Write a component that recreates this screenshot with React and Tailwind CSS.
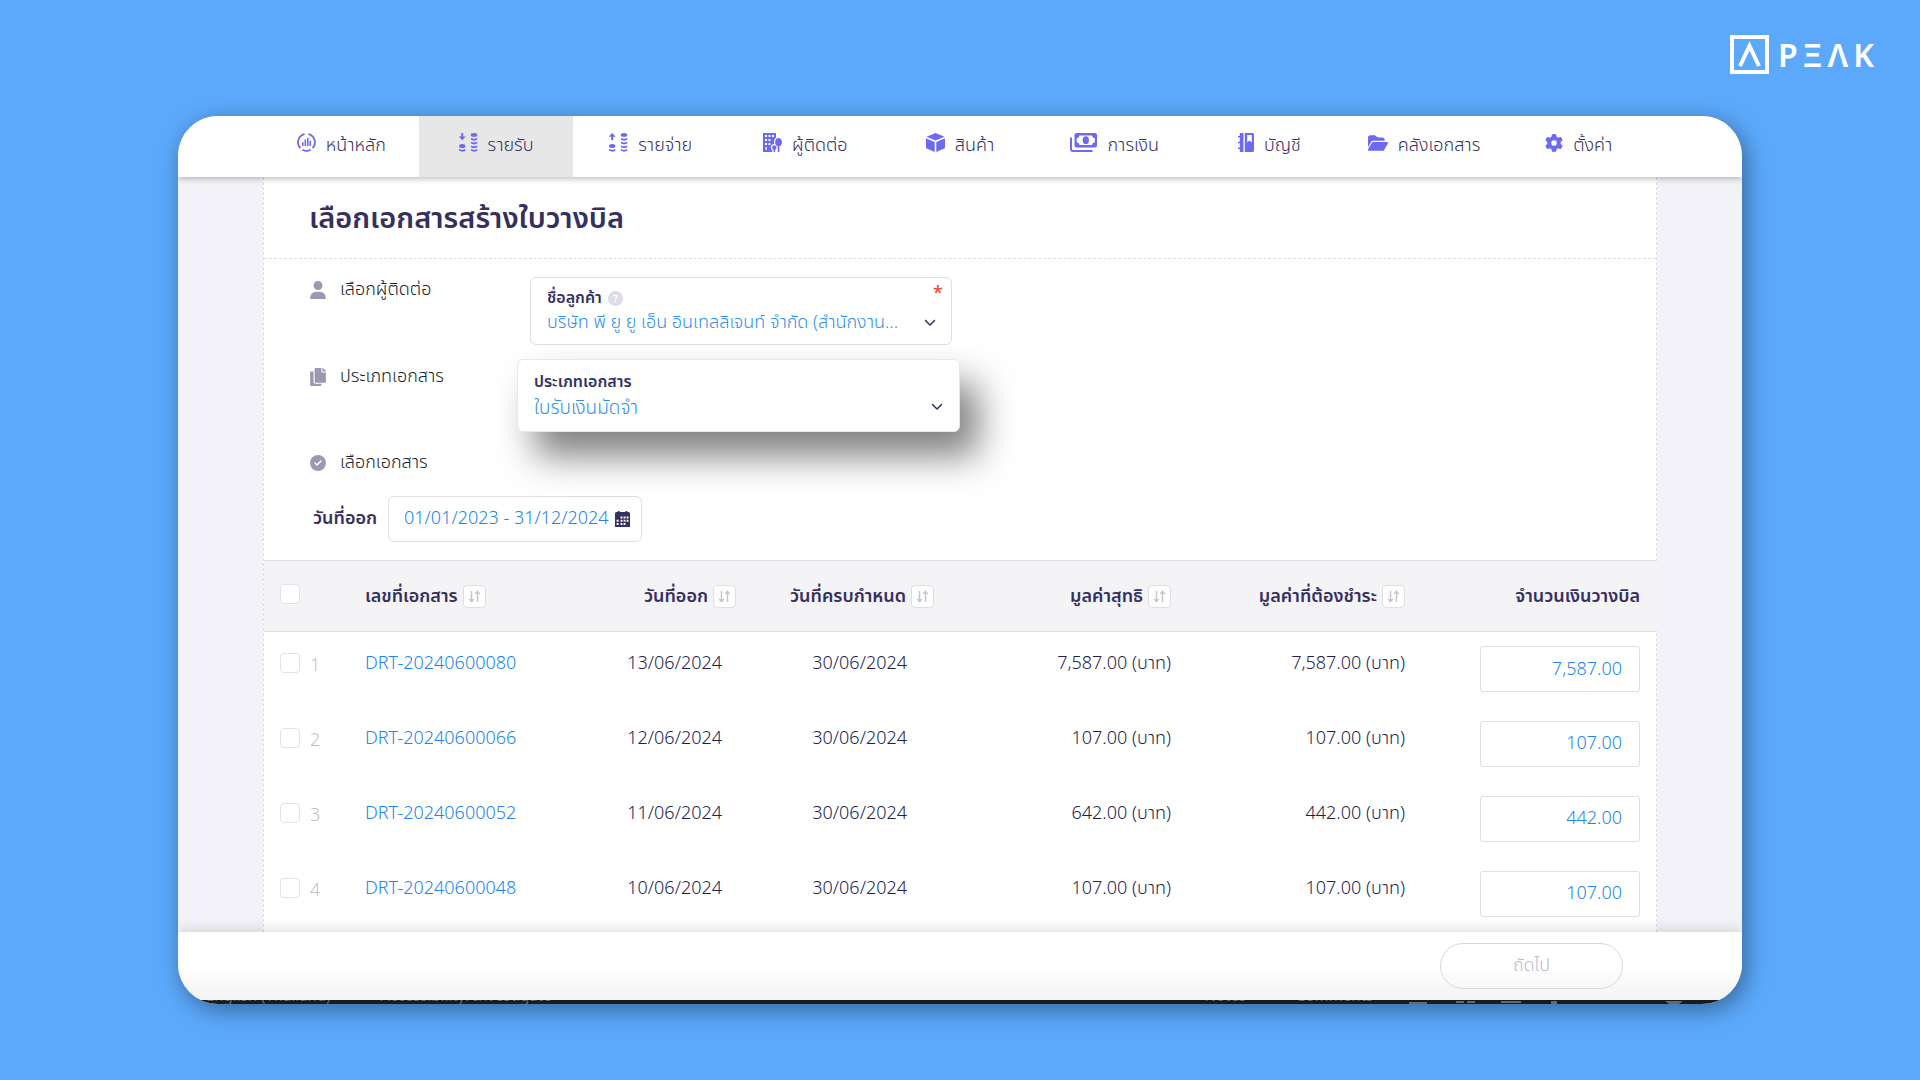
import { useState } from "react";
import {
  FaUser,
  FaCircleCheck,
  FaCircleQuestion,
  FaFolderOpen,
  FaGear,
  FaChevronDown,
} from "react-icons/fa6";
import { FaCopy } from "react-icons/fa";

function HomeIcon() {
  return (
    <svg width="19" height="19" viewBox="0 0 19 19" fill="none" stroke="currentColor" aria-hidden="true">
      <path d="M7.600 1.200A8.400 8.400 0 0 0 3.400 15.200M11.400 1.200A8.400 8.400 0 0 1 15.600 15.200M5.400 16.800a8.400 8.400 0 0 0 8.200 0" strokeWidth="1.800" />
      <path d="M5.800 13V9.200M8.300 13V6.600M10.800 13V5M13.300 13V7.800" strokeWidth="1.600" />
    </svg>
  );
}

function CoinsIcon({ up }) {
  return (
    <svg width="19" height="19" viewBox="0 0 19 19" fill="currentColor" aria-hidden="true">
      <path d={up ? "M3.200 0 6.700 3.700H4.200V7.200H2.200V3.700H-.3z" : "M2.200 0h2v3.500h2.500L3.200 7.200-.3 3.500h2.500z"} />
      <ellipse cx="3.200" cy="13" rx="3.200" ry="2" />
      <path d="M0 16c1.900 1 4.500 1 6.400 0v1.600c-1.400 1.600-5 1.600-6.400 0z" />
      <ellipse cx="15" cy="1.900" rx="3.300" ry="1.900" />
      <path d="M11.900 5c1.800 1.100 4.600 1.100 6.400 0v1.600c-1.500 1.500-4.900 1.500-6.400 0z" />
      <path d="M11.900 8.700c1.800 1.100 4.600 1.100 6.400 0v1.600c-1.500 1.500-4.900 1.500-6.400 0z" />
      <path d="M11.900 12.400c1.800 1.100 4.600 1.100 6.400 0V14c-1.500 1.500-4.900 1.500-6.400 0z" />
      <path d="M11.900 16.100c1.800 1.100 4.600 1.100 6.400 0v1.500c-1.500 1.500-4.900 1.500-6.400 0z" />
    </svg>
  );
}

function BuildingIcon() {
  return (
    <svg width="19" height="19" viewBox="0 0 19 19" fill="currentColor" aria-hidden="true">
      <path fillRule="evenodd" d="M0 0h13v4.600c-1.300 1-2 2.600-2 4.400 0 .7.100 1.400.4 2C9.500 11 8 12.500 8 14.500c0 1.300.5 2.300 1.300 3V19H0zM2 2v2h2V2zm3.500 0v2h2V2zM9 2v2h2V2zM2 6v2h2V6zm3.500 0v2h2V6zM2 10v2h2v-2zm3.500 0v2h2v-2zM2.500 14v3h1.300v-3z" />
      <path d="M15.500 5c2 0 3.500 2 3.500 4.300 0 2-1 3.500-2.600 4V19h-1.700v-5.700c-1.600-.5-2.600-2-2.600-4C12.100 7 13.500 5 15.500 5z" />
      <path d="M11.300 12.300c1.300 0 2.100 1.200 2.100 2.500 0 1-.5 1.800-1.300 2.100V19h-1.500v-2.100c-.8-.3-1.400-1.100-1.400-2.100 0-1.300.8-2.500 2.100-2.500z" />
    </svg>
  );
}

function BoxIcon() {
  return (
    <svg width="19" height="19" viewBox="0 0 19 19" fill="currentColor" aria-hidden="true">
      <path d="M9.500 0 18.500 3.800 9.500 7.600.5 3.800z" />
      <path d="M0 5.300 8.700 9v10L.8 15.600a1.300 1.300 0 0 1-.8-1.200zM19 5.300 10.300 9v10l7.900-3.400a1.300 1.300 0 0 0 .8-1.200z" />
    </svg>
  );
}

function MoneyIcon() {
  return (
    <svg width="27" height="19" viewBox="0 0 27 19" fill="currentColor" aria-hidden="true">
      <path fillRule="evenodd" d="M6.500 0h18.500a2 2 0 0 1 2 2v10.500a2 2 0 0 1-2 2H6.500a2 2 0 0 1-2-2V2a2 2 0 0 1 2-2zM9.500 2.600A3 3 0 0 1 6.700 5.200v4.100a3 3 0 0 1 2.800 2.600H22a3 3 0 0 1 2.800-2.600V5.200A3 3 0 0 1 22 2.600z" />
      <ellipse cx="15.800" cy="7.200" rx="3.100" ry="3.900" />
      <path d="M1 4.500V16a2 2 0 0 0 2 2h19.500" fill="none" stroke="currentColor" strokeWidth="2" />
    </svg>
  );
}

function BookIcon() {
  return (
    <svg width="16" height="19" viewBox="0 0 16 19" fill="currentColor" aria-hidden="true">
      <path d="M1.800 0h3.700v19H1.800zM0 3h2v1.600H0zM0 8.700h2v1.600H0zM0 14.400h2V16H0z" />
      <path fillRule="evenodd" d="M6.800 0h7.700A1.500 1.500 0 0 1 16 1.500v16a1.500 1.500 0 0 1-1.500 1.500H6.800zM9.200 2v7.600l2.300-2 2.300 2V2z" />
    </svg>
  );
}

function CalendarIcon() {
  return (
    <svg width="15" height="16" viewBox="0 0 15 16" fill="currentColor" aria-hidden="true">
      <path fillRule="evenodd" d="M1.500 1h1.300V0h1.800v1h5.800V0h1.800v1h1.300A1.500 1.500 0 0 1 15 2.500V16H0V2.500A1.500 1.500 0 0 1 1.500 1zM5.600 5.500v2h1.900v-2zm3 0v2h1.900v-2zm3 0v2h1.900v-2zm-10 3.200v2h2v-2zm4 0v2h1.900v-2zm3 0v2h1.900v-2zm3 0v2h1.900v-2zm-10 3.200v2h2v-2zm4 0v2h1.900v-2zm3 0v2h1.900v-2z" />
    </svg>
  );
}

function SortButton({ label }) {
  return (
    <button
      type="button"
      aria-label={label}
      className="flex h-[23px] w-[23px] shrink-0 items-center justify-center rounded border border-[#dfdfe2] bg-white text-[#c8c8cc]"
    >
      <svg width="13" height="13" viewBox="0 0 13 13" fill="none" stroke="currentColor" strokeWidth="1.500" aria-hidden="true">
        <path d="M3.500 1v10.500M1.200 9l2.300 2.700L5.800 9M9.500 12V1.500M7.200 4l2.300-2.700L11.800 4" />
      </svg>
    </button>
  );
}

const tabs = [
  { label: "หน้าหลัก", icon: <HomeIcon /> },
  { label: "รายรับ", icon: <CoinsIcon />, active: true },
  { label: "รายจ่าย", icon: <CoinsIcon up /> },
  { label: "ผู้ติดต่อ", icon: <BuildingIcon /> },
  { label: "สินค้า", icon: <BoxIcon /> },
  { label: "การเงิน", icon: <MoneyIcon /> },
  { label: "บัญชี", icon: <BookIcon /> },
  { label: "คลังเอกสาร", icon: <FaFolderOpen className="size-5" /> },
  { label: "ตั้งค่า", icon: <FaGear className="size-[18px]" /> },
];

const rows = [
  { id: 1, doc: "DRT-20240600080", issued: "13/06/2024", due: "30/06/2024", net: "7,587.00", pay: "7,587.00" },
  { id: 2, doc: "DRT-20240600066", issued: "12/06/2024", due: "30/06/2024", net: "107.00", pay: "107.00" },
  { id: 3, doc: "DRT-20240600052", issued: "11/06/2024", due: "30/06/2024", net: "642.00", pay: "442.00" },
  { id: 4, doc: "DRT-20240600048", issued: "10/06/2024", due: "30/06/2024", net: "107.00", pay: "107.00" },
];

function Logo() {
  return (
    <div className="flex items-center gap-[9px] text-white" aria-label="PEAK">
      <svg width="39" height="39" viewBox="0 0 39 39" fill="none" stroke="currentColor" aria-hidden="true">
        <rect x="2" y="2" width="35" height="35" strokeWidth="4" />
        <path d="M10 31 19.500 11 29 31" strokeWidth="4" />
      </svg>
      <div className="flex gap-[5px] font-['Noto_Sans',sans-serif] text-[32px] leading-[38px] font-semibold">
        <span>P</span>
        <span>Ξ</span>
        <span>Λ</span>
        <span>K</span>
      </div>
    </div>
  );
}

function SectionLabel({ icon, children }) {
  return (
    <div className="flex h-[26px] items-center gap-3.5 text-[18px] font-[350] text-[#1d1d2b]">
      <span className="flex w-4 justify-center text-[#9b98b3]">{icon}</span>
      <span>{children}</span>
    </div>
  );
}

function HeaderCell({ children, align, sort = true }) {
  return (
    <div className={align === "left" ? "flex items-center gap-[5px]" : "flex items-center justify-end gap-[5px]"}>
      <span className="pt-0.5">{children}</span>
      {sort && <SortButton label={"เรียงตาม" + children} />}
    </div>
  );
}

const checkboxStyle = "block size-5 shrink-0 appearance-none rounded border border-[#e2e2ea] bg-white checked:bg-[#6d6af0]";

export default function App() {
  const [range, setRange] = useState("01/01/2023 - 31/12/2024");

  return (
    <div className="min-h-screen bg-[#5ca9fc] font-['Noto_Sans_Thai','Noto_Sans',sans-serif] text-[18px] leading-[26px] text-[#35305f]">
      <header className="flex h-[116px] items-start justify-end pt-[35px] pr-[46px]">
        <Logo />
      </header>

      <div className="mx-[178px] overflow-hidden rounded-[40px] bg-white shadow-[4px_6px_24px_rgba(0,0,0,0.400)]">
        <nav className="relative z-20 flex bg-white px-[86px] shadow-[0_2px_6px_rgba(0,0,0,0.250)]">
          {tabs.map((t) => (
            <a
              key={t.label}
              href="#"
              className={
                t.active
                  ? "flex h-[61px] flex-1 items-center justify-center gap-2.5 bg-[#e7e7e7] pb-0.5 font-[350]"
                  : "flex h-[61px] flex-1 items-center justify-center gap-2.5 pb-0.5 font-[350]"
              }
            >
              <span className="pb-1.5 text-[#6d6af0]">{t.icon}</span>
              <span>{t.label}</span>
            </a>
          ))}
        </nav>

        <main className="bg-[#f3f2f8] px-[85px]">
          <div className="border-x border-dashed border-[#dddde2] bg-white">
            <h1 className="flex h-[82px] items-center border-b border-dashed border-[#dddde2] px-[45px] pt-0.5 text-[29px] font-semibold">
              เลือกเอกสารสร้างใบวางบิล
            </h1>

            <section className="px-[46px] pt-[18px] pb-[18px]">
              <div className="grid grid-cols-[220px_1fr] items-start">
                <SectionLabel icon={<FaUser className="size-[18px]" />}>เลือกผู้ติดต่อ</SectionLabel>
                <div className="relative flex h-[68px] w-[422px] flex-col rounded-md border border-[#e0dfe6] bg-white px-4 pt-[7px]">
                  <label htmlFor="customer" className="flex items-center gap-1.5 text-[16px] leading-[26px] font-semibold">
                    ชื่อลูกค้า
                    <FaCircleQuestion className="size-[15px] text-[#dcdbe6]" />
                  </label>
                  <select id="customer" className="w-full appearance-none bg-transparent pr-8 leading-6 font-[350] text-[#2f8ff0] outline-none">
                    <option>บริษัท พี ยู ยู เอ็น อินเทลลิเจนท์ จำกัด (สำนักงาน...</option>
                  </select>
                  <span className="pointer-events-none absolute top-1 right-2 text-[18px] leading-6 font-medium text-[#f0452c]">*</span>
                  <FaChevronDown className="pointer-events-none absolute top-[38px] right-[15px] size-3" />
                </div>
              </div>

              <div className="mt-3.5 grid grid-cols-[220px_1fr] items-start">
                <div className="pt-[5px]">
                  <SectionLabel icon={<FaCopy className="size-[18px]" />}>ประเภทเอกสาร</SectionLabel>
                </div>
                <div className="relative z-10 -ml-[13px] flex h-[73px] w-[443px] flex-col rounded-md border border-[#e8e8ec] bg-white px-4 pt-[9px] shadow-[18px_24px_36px_rgba(0,0,0,0.500)]">
                  <label htmlFor="doctype" className="text-[16px] leading-[26px] font-semibold">
                    ประเภทเอกสาร
                  </label>
                  <select id="doctype" className="w-full appearance-none bg-transparent pr-8 text-[19px] leading-7 font-[350] text-[#2f8ff0] outline-none">
                    <option>ใบรับเงินมัดจำ</option>
                  </select>
                  <FaChevronDown className="pointer-events-none absolute top-10 right-4 size-3" />
                </div>
              </div>

              <div className="mt-[18px]">
                <SectionLabel icon={<FaCircleCheck className="size-[18px]" />}>เลือกเอกสาร</SectionLabel>
              </div>

              <div className="mt-5 flex items-center gap-[11px] pl-[3px]">
                <label htmlFor="issued" className="font-semibold">
                  วันที่ออก
                </label>
                <div className="flex h-[46px] w-[254px] items-center rounded-md border border-[#e0dfe6] pr-[11px] pl-[15px]">
                  <input
                    id="issued"
                    value={range}
                    onChange={(e) => setRange(e.target.value)}
                    className="w-0 flex-1 bg-transparent font-light text-[#2085f0] outline-none"
                  />
                  <CalendarIcon />
                </div>
              </div>
            </section>

            <table className="w-full table-fixed border-collapse">
              <colgroup>
                <col className="w-[101px]" />
                <col className="w-[173px]" />
                <col className="w-[198px]" />
                <col className="w-[198px]" />
                <col className="w-[237px]" />
                <col className="w-[234px]" />
                <col className="w-[252px]" />
              </colgroup>
              <thead>
                <tr className="h-[71px] border-t border-b border-t-[#dddde2] border-b-[#dddde2] bg-[#f4f4f7] [&>th]:font-semibold">
                  <th className="pb-1 pl-4">
                    <input type="checkbox" aria-label="เลือกทั้งหมด" className={checkboxStyle} />
                  </th>
                  <th>
                    <HeaderCell align="left">เลขที่เอกสาร</HeaderCell>
                  </th>
                  <th>
                    <HeaderCell>วันที่ออก</HeaderCell>
                  </th>
                  <th>
                    <HeaderCell>วันที่ครบกำหนด</HeaderCell>
                  </th>
                  <th>
                    <HeaderCell>มูลค่าสุทธิ</HeaderCell>
                  </th>
                  <th>
                    <HeaderCell>มูลค่าที่ต้องชำระ</HeaderCell>
                  </th>
                  <th className="pr-[17px]">
                    <HeaderCell sort={false}>จำนวนเงินวางบิล</HeaderCell>
                  </th>
                </tr>
              </thead>
              <tbody>
                {rows.map((r) => (
                  <tr key={r.id} className="h-[75px] font-light text-[#231e50] [&>td]:pt-[19px] [&>td]:align-top">
                    <td className="pl-4">
                      <label className="flex items-start gap-2.5 pt-0.5 text-[#c0c0c6]">
                        <input type="checkbox" className={checkboxStyle} />
                        <span>{r.id}</span>
                      </label>
                    </td>
                    <td>
                      <a href="#" className="text-[#2085f0]">
                        {r.doc}
                      </a>
                    </td>
                    <td className="pr-3.5 text-right">{r.issued}</td>
                    <td className="pr-[27px] text-right">{r.due}</td>
                    <td className="text-right">{r.net} (บาท)</td>
                    <td className="text-right">{r.pay} (บาท)</td>
                    <td className="pr-[17px] pl-[75px]">
                      <input
                        aria-label={"จำนวนเงินวางบิล " + r.doc}
                        defaultValue={r.pay}
                        className="-mt-[5px] block h-[46px] w-full rounded-[3px] border border-[#e0dfe6] bg-white pr-[17px] text-right font-light text-[#2085f0] outline-none"
                      />
                    </td>
                  </tr>
                ))}
              </tbody>
            </table>
          </div>
        </main>

        <footer className="relative z-10 flex h-[68px] justify-end bg-linear-to-b from-white from-50% to-[#f3f3f3] pt-[11px] pr-[119px] shadow-[0_0_14px_rgba(0,0,0,0.180)]">
          <button type="button" className="h-[46px] w-[183px] rounded-full border border-[#d9d8e2] font-light text-[#bdbace]">
            ถัดไป
          </button>
        </footer>

        <div className="flex h-1 items-end justify-between overflow-hidden bg-[#1b1d1f] pr-[58px] pl-[28px] text-[15px] leading-[14px] text-[#707070]">
          <div className="flex items-end gap-[50px]">
            <span>English (Thailand)</span>
            <span>Accessibility: Investigate</span>
          </div>
          <div className="flex items-end gap-9">
            <div className="flex items-end gap-[50px]">
              <span>Notes</span>
              <span>Comments</span>
            </div>
            <svg width="275" height="4" viewBox="0 0 275 4" fill="currentColor" aria-hidden="true">
              <path d="M0 2h18v2H0zM47 1h8v2h-8zM58 1h8v2h-8zM92 1h20v2H92zM142 1h6v3h-6zM256 1h18l-4 3h-10z" />
            </svg>
          </div>
        </div>
      </div>
    </div>
  );
}
